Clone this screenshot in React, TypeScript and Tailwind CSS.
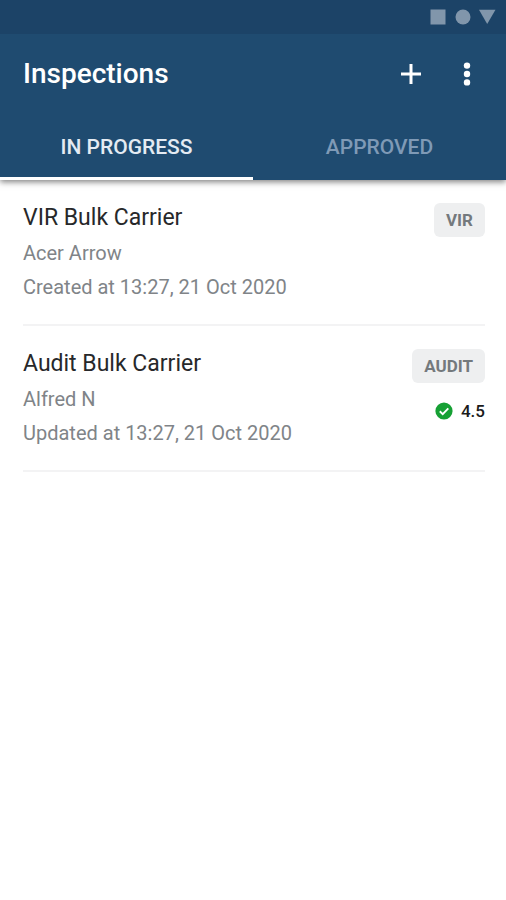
import { useState } from 'react'
import clsx from 'clsx'

interface Inspection {
  id: number
  title: string
  person: string
  date: string
  type: string
  score?: string
}

const inspections: Inspection[] = [
  { id: 1, title: 'VIR Bulk Carrier', person: 'Acer Arrow', date: 'Created at 13:27, 21 Oct 2020', type: 'VIR' },
  { id: 2, title: 'Audit Bulk Carrier', person: 'Alfred N', date: 'Updated at 13:27, 21 Oct 2020', type: 'AUDIT', score: '4.5' },
]

const tabs = ['IN PROGRESS', 'APPROVED']

function StatusBar() {
  return (
    <div className="flex h-[34px] items-center justify-end bg-[#1c4367] px-2.5">
      <svg width="66" height="16" viewBox="0 0 66 16" fill="#8196ab" aria-hidden="true">
        <rect x="0.5" y="0.5" width="15" height="15" />
        <circle cx="33" cy="8" r="7.5" />
        <path d="M49 0.8h16.5L57.2 15z" />
      </svg>
    </div>
  )
}

function InspectionRow({ item }: { item: Inspection }) {
  return (
    <li className="flex justify-between border-b-2 border-[#f3f3f4] py-5">
      <div>
        <h2 className="text-[23px] leading-9 text-[#27282a]">{item.title}</h2>
        <p className="text-[20px] leading-[34px] text-[#808488]">{item.person}</p>
        <p className="text-[20px] leading-[34px] text-[#808488]">{item.date}</p>
      </div>
      <div className="flex flex-col items-end gap-4 pt-[3px]">
        <span className="rounded-md bg-[#eeeff0] px-3 text-[17px] leading-[34px] font-bold text-[#74797d]">{item.type}</span>
        {item.score && (
          <span className="flex items-center gap-2 text-[17px] leading-6 font-medium text-[#1b1b1b]">
            <svg width="18" height="18" viewBox="0 0 18 18" fill="none" aria-hidden="true">
              <circle cx="9" cy="9" r="8.6" fill="#16a034" />
              <path d="M4.8 9.3l2.9 2.8 5.6-5.8" stroke="#fff" strokeWidth="1.9" />
            </svg>
            {item.score}
          </span>
        )}
      </div>
    </li>
  )
}

export default function App() {
  const [active, setActive] = useState(0)

  return (
    <div className="min-h-screen bg-white font-[Roboto,sans-serif]">
      <header className="bg-[#1f4b70] shadow-[0_2px_6px_rgba(0,0,0,0.5)]">
        <StatusBar />
        <div className="flex h-20 items-center justify-between pr-[23px] pl-[23px]">
          <h1 className="text-[28px] leading-8 font-medium text-white">Inspections</h1>
          <div className="flex gap-6">
            <button type="button" aria-label="Add inspection" className="flex size-8 items-center justify-center">
              <svg width="22" height="22" viewBox="0 0 22 22" fill="none" stroke="#fff" strokeWidth="3" aria-hidden="true">
                <path d="M11 1v20M1 11h20" />
              </svg>
            </button>
            <button type="button" aria-label="More options" className="flex size-8 items-center justify-center">
              <svg width="8" height="24" viewBox="0 0 8 24" fill="#fff" aria-hidden="true">
                <circle cx="4" cy="3.6" r="3.2" />
                <circle cx="4" cy="12" r="3.2" />
                <circle cx="4" cy="20.4" r="3.2" />
              </svg>
            </button>
          </div>
        </div>
        <div role="tablist" className="grid grid-cols-2">
          {tabs.map((tab, i) => (
            <button
              key={tab}
              type="button"
              role="tab"
              aria-selected={active === i}
              onClick={() => setActive(i)}
              className={clsx(
                'h-[66px] border-b-3 pt-[3px] text-[21px] leading-6 font-medium',
                active === i ? 'border-white text-[#e4ebf3]' : 'border-transparent text-[#7f9ab6]',
              )}
            >
              {tab}
            </button>
          ))}
        </div>
      </header>

      <ul className="pr-[21px] pl-[23px]">
        {active === 0 && inspections.map(item => <InspectionRow key={item.id} item={item} />)}
      </ul>
    </div>
  )
}
